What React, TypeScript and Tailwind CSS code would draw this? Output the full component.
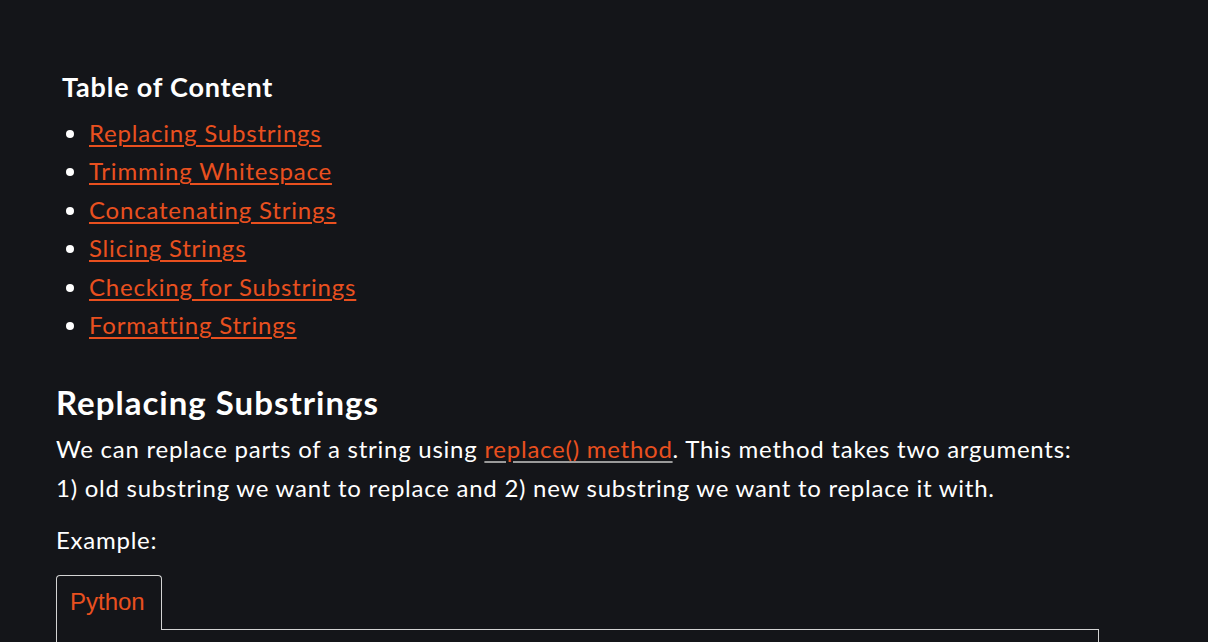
import React from "react";

const links = [
  "Replacing Substrings",
  "Trimming Whitespace",
  "Concatenating Strings",
  "Slicing Strings",
  "Checking for Substrings",
  "Formatting Strings",
];

export default function App() {
  return (
    <div
      className="min-h-[642px] w-full bg-[#141519] text-white"
      style={{ fontFamily: "Lato, 'Noto Sans', sans-serif" }}
    >
      <div className="w-[1043px] ml-[56px] pt-[68px]">
        <div className="pl-[6px]">
          <h3 className="text-[27px] font-bold leading-[38px] tracking-[0.8px]">Table of Content</h3>
          <ul className="list-disc pl-[27px] mt-[8px] text-[24px] leading-[38.4px] tracking-[0.8px]">
            {links.map((l) => (
              <li key={l} className="marker:text-white">
                <a href="#" className="text-[#e9501f] underline underline-offset-[3px] decoration-2">
                  {l}
                </a>
              </li>
            ))}
          </ul>
        </div>
        <h2 className="mt-[36px] text-[33px] font-bold leading-[44px] tracking-[1px]">Replacing Substrings</h2>
        <p className="text-[24px] leading-[39px] mt-[5px] tracking-[0.75px]">
          We can replace parts of a string using{" "}
          <a href="#" className="text-[#e9501f] underline underline-offset-[3px] decoration-2 decoration-[#9a9a9a]">
            replace() method
          </a>
          . This method takes two arguments: 1) old substring we want to replace and 2) new substring we want to replace it with.
        </p>
        <p className="text-[24px] leading-[39px] mt-[13px] tracking-[0.75px]">Example:</p>
        <div className="mt-[16px]">
          <div className="flex">
            <div
              className="relative z-10 -mb-px h-[55px] w-[106px] pl-[13px] pb-[3px] flex items-center border border-b-0 border-[#d4d4d4] rounded-t-[4px] bg-[#141519] text-[#e9501f] text-[24px]"
              style={{ fontFamily: "'Liberation Sans', Arial, sans-serif" }}
            >
              Python
            </div>
          </div>
          <div className="border border-[#d4d4d4] h-[60px]" />
        </div>
      </div>
    </div>
  );
}
